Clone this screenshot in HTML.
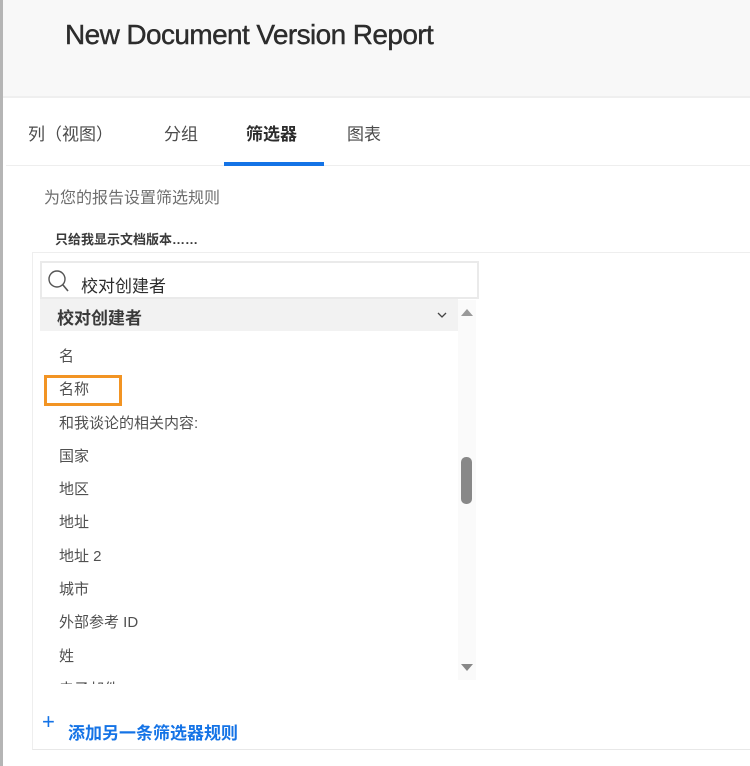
<!DOCTYPE html>
<html><head><meta charset="utf-8"><style>
body{margin:0;width:750px;height:766px;background:#fff;position:relative;overflow:hidden;font-family:"Liberation Sans","Noto Sans CJK SC",sans-serif;color:#4b4b4b}
.a{position:absolute}
.it{position:absolute;left:59px;font-size:15px;color:#505050;line-height:20px}
</style></head><body>
<div class="a" style="left:0;top:0;width:3px;height:766px;background:#b5b5b5"></div>
<div class="a" style="left:3px;top:0;width:747px;height:96px;background:#f8f8f8;border-bottom:2px solid #efefef"></div>
<div class="a" style="left:65px;top:19px;font-size:28px;color:#2c2c2c;letter-spacing:-0.6px;-webkit-text-stroke:0.4px #2c2c2c">New Document Version Report</div>
<div class="a" style="left:28px;top:120px;font-size:17px;color:#4b4b4b">列（视图）</div>
<div class="a" style="left:164px;top:120px;font-size:17px;color:#4b4b4b">分组</div>
<div class="a" style="left:246px;top:120px;font-size:17px;color:#2c2c2c;font-weight:bold">筛选器</div>
<div class="a" style="left:347px;top:120px;font-size:17px;color:#4b4b4b">图表</div>
<div class="a" style="left:6px;top:165px;width:744px;height:1px;background:#eee"></div>
<div class="a" style="left:224px;top:162px;width:100px;height:4px;background:#1473e6"></div>
<div class="a" style="left:44px;top:184px;font-size:16px;color:#6e6e6e">为您的报告设置筛选规则</div>
<div class="a" style="left:55px;top:229px;font-size:13px;color:#3a3a3a;font-weight:bold">只给我显示文档版本……</div>
<div class="a" style="left:32px;top:252px;width:718px;height:496px;border-top:1px solid #eee;border-left:1px solid #eee;border-bottom:1px solid #e8e8e8"></div>
<div class="a" style="left:40px;top:261px;width:435px;height:34px;border:2px solid #eaeaea;background:#fff"></div>
<svg class="a" style="left:46px;top:268px" width="28" height="26"><circle cx="11" cy="11" r="8" fill="none" stroke="#555" stroke-width="1.4"/><path d="M17 17 L22 23" stroke="#555" stroke-width="1.6"/></svg>
<div class="a" style="left:81px;top:272px;font-size:17px;color:#2c2c2c">校对创建者</div>
<div class="a" style="left:40px;top:299px;width:418px;height:32px;background:#f2f2f2"></div>
<div class="a" style="left:57px;top:304px;font-size:17px;font-weight:bold;color:#3a3a3a">校对创建者</div>
<svg class="a" style="left:436px;top:310px" width="12" height="10"><path d="M2 3 L6 7 L10 3" fill="none" stroke="#444" stroke-width="1.3"/></svg>
<div class="a" style="left:458px;top:300px;width:18px;height:380px;background:#fafafa"></div>
<div class="a" style="left:461px;top:309px;width:0;height:0;border-left:6px solid transparent;border-right:6px solid transparent;border-bottom:7px solid #999"></div>
<div class="a" style="left:461px;top:664px;width:0;height:0;border-left:6px solid transparent;border-right:6px solid transparent;border-top:7px solid #888"></div>
<div class="a" style="left:461px;top:457px;width:11px;height:47px;border-radius:5px;background:#888"></div>
<div class="it" style="top:347px">名</div>
<div class="a" style="left:44px;top:375px;width:78px;height:31px;border:3px solid #f29423;box-sizing:border-box"></div>
<div class="it" style="top:380px">名称</div>
<div class="it" style="top:414px">和我谈论的相关内容:</div>
<div class="it" style="top:447px">国家</div>
<div class="it" style="top:480px">地区</div>
<div class="it" style="top:513px">地址</div>
<div class="it" style="top:547px">地址 2</div>
<div class="it" style="top:580px">城市</div>
<div class="it" style="top:613px">外部参考 ID</div>
<div class="it" style="top:647px">姓</div>
<div class="it" style="top:680px">电子邮件</div>
<div class="a" style="left:40px;top:684px;width:440px;height:20px;background:#fff"></div>
<div class="a" style="left:42px;top:711px;font-size:22px;color:#1473e6;line-height:22px">+</div>
<div class="a" style="left:68px;top:719px;font-size:17px;color:#1473e6;font-weight:bold">添加另一条筛选器规则</div>
</body></html>
